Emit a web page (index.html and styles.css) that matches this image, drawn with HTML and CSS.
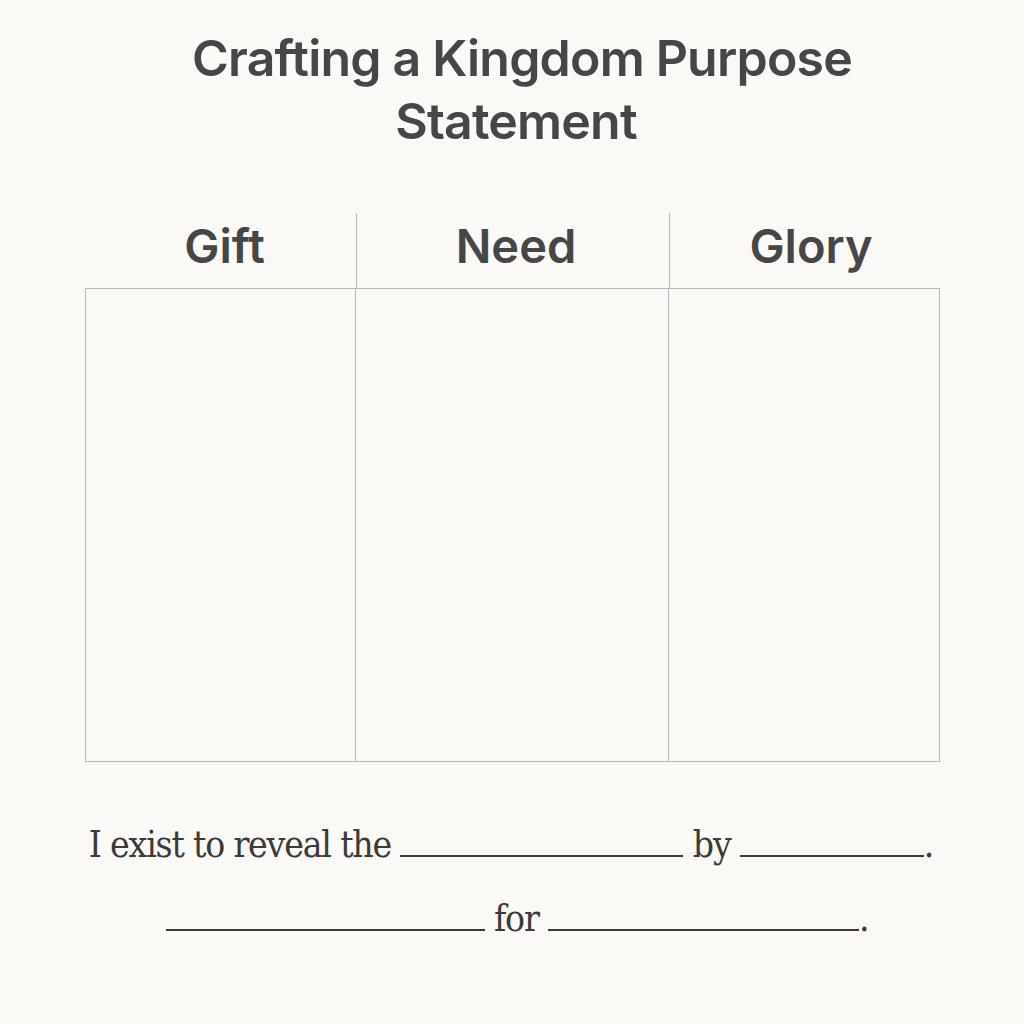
FILE: index.html
```html
<!DOCTYPE html>
<html>
<head>
<meta charset="utf-8">
<link rel="stylesheet" href="styles.css">
</head>
<body>
<main class="page">
  <h1 class="title">Crafting a Kingdom Purpose<br><span class="second">Statement</span></h1>
  <section class="chart">
    <div class="head">Gift</div>
    <div class="head divided">Need</div>
    <div class="head divided last">Glory</div>
    <div class="cell first"></div>
    <div class="cell"></div>
    <div class="cell"></div>
  </section>
  <section class="statement">
    <p class="line one">I exist to reveal the <span class="blank b1"></span> by <span class="blank b2"></span>.</p>
    <p class="line two"><span class="blank b3"></span> for <span class="blank b4"></span>.</p>
  </section>
</main>
</body>
</html>
```
FILE: styles.css
```css
html, body {
  margin: 0;
  padding: 0;
  background: #faf9f5;
}
.page {
  width: 1024px;
  height: 1024px;
  box-sizing: border-box;
  padding-top: 27px;
  display: flex;
  flex-direction: column;
  align-items: center;
}
.title {
  margin: 0 0 0 20px;
  font-family: Inter, "Liberation Sans", sans-serif;
  font-weight: 600;
  font-size: 50px;
  line-height: 63px;
  letter-spacing: -0.8px;
  color: #464646;
  text-align: center;
}
.second {
  display: inline-block;
  margin-right: 12px;
}
.chart {
  margin-top: 60px;
  margin-left: 1px;
  display: grid;
  grid-template-columns: 271px 313px 271px;
  grid-template-rows: 75px 474px;
}
.head {
  display: flex;
  align-items: center;
  justify-content: center;
  font-family: Inter, "Liberation Sans", sans-serif;
  font-weight: 600;
  font-size: 47px;
  color: #464646;
  padding-left: 8px;
  padding-bottom: 10px;
  box-sizing: border-box;
}
.head.divided {
  border-left: 1px solid #b8b8b8;
  padding-left: 6px;
}
.head.last {
  padding-left: 12px;
}
.cell {
  border: 1px solid #b8b8b8;
  border-left: none;
}
.cell.first {
  border-left: 1px solid #b8b8b8;
}
.statement {
  align-self: stretch;
  margin-top: 61px;
  font-family: "DejaVu Serif", serif;
  font-stretch: condensed;
  color: #3a3a3a;
  font-size: 37px;
}
.line {
  margin: 0;
  white-space: nowrap;
  letter-spacing: -1.2px;
  line-height: 44px;
  text-align: center;
}
.line.one {
  padding-right: 2px;
}
.line.two {
  margin-top: 30px;
  padding-left: 10px;
}
.blank {
  display: inline-block;
  border-bottom: 2px solid #3a3a3a;
  height: 0;
  vertical-align: baseline;
}
.b1 { width: 283px; }
.b2 { width: 184px; }
.b3 { width: 319px; }
.b4 { width: 311px; }
```
